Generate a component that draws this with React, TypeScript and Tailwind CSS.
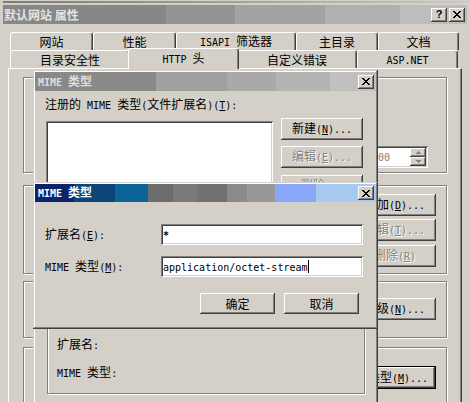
// MIME type dialogs over the IIS "默认网站 属性" sheet — Windows 2000 look

import React from "react";

const raised =
  "bg-[#d4d0c8] shadow-[inset_-1px_-1px_#404040,inset_1px_1px_#ffffff,inset_-2px_-2px_#808080,inset_2px_2px_#d4d0c8]";
const raisedDefault =
  "bg-[#d4d0c8] border border-black shadow-[inset_-1px_-1px_#404040,inset_1px_1px_#ffffff,inset_-2px_-2px_#808080]";
const sunken =
  "bg-white shadow-[inset_1px_1px_#808080,inset_-1px_-1px_#ffffff,inset_2px_2px_#404040,inset_-2px_-2px_#d4d0c8]";
const frame =
  "bg-[#d4d0c8] shadow-[inset_-1px_-1px_#404040,inset_1px_1px_#d4d0c8,inset_-2px_-2px_#808080,inset_2px_2px_#ffffff]";
const etched = "border border-[#808080] shadow-[inset_1px_1px_#ffffff,1px_1px_#ffffff]";
const tab =
  "flex items-center justify-center pt-[1px] border-t border-l border-white border-r border-r-[#404040] rounded-t-[3px] shadow-[inset_-1px_0_#808080]";

// ASCII runs use a 6px-wide mono face, like SimSun's half-width glyphs; "&X" underlines X
function Latin({ s }: { s: string }) {
  const out: React.ReactNode[] = [];
  const re = /&(.)/g;
  let last = 0;
  let k = 0;
  let m: RegExpExecArray | null;
  while ((m = re.exec(s))) {
    if (m.index > last) out.push(s.slice(last, m.index));
    out.push(
      <span key={k++} className="underline underline-offset-[1px]">
        {m[1]}
      </span>
    );
    last = m.index + 2;
  }
  if (last < s.length) out.push(s.slice(last));
  return (
    <span className="font-['DejaVu_Sans_Mono',monospace] text-[10px] leading-[14px] whitespace-pre">{out}</span>
  );
}

function Txt({ s, disabled = false, className = "" }: { s: string; disabled?: boolean; className?: string }) {
  const parts = s.split(/([\x20-\x7e]+)/).filter(Boolean);
  return (
    <span
      className={`whitespace-pre leading-[14px] ${disabled ? "text-[#808080] [text-shadow:1px_1px_0_#ffffff]" : ""} ${className}`}
    >
      {parts.map((p, i) => (/^[\x20-\x7e]+$/.test(p) ? <Latin key={i} s={p} /> : <span key={i}>{p}</span>))}
    </span>
  );
}

function Btn({
  label,
  className = "",
  disabled = false,
  isDefault = false,
}: {
  label: string;
  className?: string;
  disabled?: boolean;
  isDefault?: boolean;
}) {
  return (
    <div className={`flex items-center justify-center shrink-0 ${isDefault ? raisedDefault : raised} ${className}`}>
      <Txt s={label} disabled={disabled} />
    </div>
  );
}

function CloseGlyph() {
  return (
    <svg width="8" height="7" viewBox="0 0 8 7" shapeRendering="crispEdges">
      <path
        fill="#000"
        d="M0 0h2v1H0z M6 0h2v1H6z M1 1h2v1H1z M5 1h2v1H5z M2 2h4v1H2z M3 3h2v1H3z M2 4h4v1H2z M1 5h2v1H1z M5 5h2v1H5z M0 6h2v1H0z M6 6h2v1H6z"
      />
    </svg>
  );
}

function CaptionBtn({ children }: { children: React.ReactNode }) {
  return <div className={`w-[16px] h-[14px] flex items-center justify-center ${raised}`}>{children}</div>;
}

function SpinArrow({ up }: { up: boolean }) {
  return (
    <svg width="5" height="3" viewBox="0 0 5 3" shapeRendering="crispEdges">
      <path fill="#808080" d={up ? "M2 0h1v1h1v1h1v1H0V2h1V1h1z" : "M0 0h5v1H4v1H3v1H2V2H1V1H0z"} />
    </svg>
  );
}

function MainWindow() {
  return (
    <div className="flex flex-col h-[440px] px-[3px] pt-[1px]">
      <div className="h-[2px] bg-linear-to-r from-[#7c7c7c] to-[#c8c8c8]" />
      <div className="h-[2px]" />

      {/* caption */}
      <div className="h-[19px] flex items-center justify-between pl-[1px] pr-[2px] bg-[linear-gradient(to_right,#878787_0_163px,#939393_163px_232px,#a3a3a3_232px_322px,#b0b0b0_322px_397px,#bdbdbd_397px)]">
        <span className="font-bold text-[#e4e4e4]">默认网站 属性</span>
        <div className="flex gap-[2px]">
          <CaptionBtn>
            <span className="font-['Liberation_Sans',sans-serif] font-bold text-[11px] leading-none">?</span>
          </CaptionBtn>
          <CaptionBtn>
            <CloseGlyph />
          </CaptionBtn>
        </div>
      </div>

      {/* tabs */}
      <div className="mt-[8px] ml-[7px] flex h-[18px]">
        <div className={`${tab} w-[83px]`}>网站</div>
        <div className={`${tab} w-[83px]`}>性能</div>
        <div className={`${tab} w-[120px]`}>
          <Txt s="ISAPI 筛选器" />
        </div>
        <div className={`${tab} w-[82px]`}>主目录</div>
        <div className={`${tab} w-[81px]`}>文档</div>
      </div>
      <div className="ml-[7px] flex h-[18px]">
        <div className={`${tab} w-[120px]`}>目录安全性</div>
        <div className="relative z-10 -mt-[2px] -mx-[2px] w-[111px] h-[21px] bg-[#d4d0c8] flex items-center justify-center border-t border-l border-white border-r border-r-[#404040] rounded-t-[3px] shadow-[inset_-1px_0_#808080]">
          <Txt s="HTTP 头" />
        </div>
        <div className={`${tab} w-[120px]`}>自定义错误</div>
        <div className={`${tab} w-[101px]`}>
          <Txt s="ASP.NET" />
        </div>
      </div>

      {/* HTTP header page */}
      <div className="flex-1 ml-[5px] w-[454px] border border-white border-r-[#404040] border-b-[#404040] shadow-[inset_-1px_-1px_#808080] pt-[8px] px-[14px] flex flex-col">
        <div className={`${etched} h-[96px] flex items-end justify-end pb-[4px] pr-[18px]`}>
          <div className={`${sunken} w-[88px] h-[22px] flex items-center justify-end p-[2px]`}>
            <Txt s="00" disabled className="mr-[20px]" />
            <div className="flex flex-col">
              <div className={`${raised} w-[16px] h-[9px] flex items-center justify-center`}>
                <SpinArrow up />
              </div>
              <div className={`${raised} w-[16px] h-[9px] flex items-center justify-center`}>
                <SpinArrow up={false} />
              </div>
            </div>
          </div>
        </div>

        <div className={`${etched} mt-[12px] h-[89px] flex flex-col items-end pt-[8px] pr-[10px]`}>
          <Btn label="添加(&D)..." className="w-[82px] h-[22px]" />
          <Btn label="编辑(&T)..." disabled className="w-[82px] h-[22px] mt-[3px]" />
          <Btn label="删除(&R)" disabled className="w-[82px] h-[22px] mt-[4px]" />
        </div>

        <div className={`${etched} mt-[7px] h-[57px] flex flex-col items-end pt-[16px] pr-[10px]`}>
          <Btn label="高级(&N)..." className="w-[82px] h-[22px]" />
        </div>

        <div className={`${etched} mt-[9px] h-[80px] flex flex-col items-end pt-[18px] pr-[10px]`}>
          <Btn label="文件类型(&M)..." isDefault className="w-[100px] h-[23px]" />
        </div>
      </div>
    </div>
  );
}

function MimeListDialog() {
  return (
    <div className={`absolute left-[33px] top-[70px] w-[345px] h-[345px] p-[2px] ${frame}`}>
      <div className="h-[19px] flex items-center justify-between pl-[3px] pr-[2px] bg-[linear-gradient(to_right,#898989_0_121px,#a0a0a0_121px_192px,#a9a9a9_192px_241px,#b4b4b4_241px_295px,#c0c0c0_295px)]">
        <Txt s="MIME 类型" className="font-bold text-[#dedede]" />
        <CaptionBtn>
          <CloseGlyph />
        </CaptionBtn>
      </div>

      <div className="pl-[10px] flex flex-col">
        <div className="mt-[7px] h-[14px] flex items-center">
          <Txt s="注册的 MIME 类型(文件扩展名)(&T):" />
        </div>
        <div className="mt-[6px] flex">
          <div className={`${sunken} mt-[3px] ml-[1px] w-[227px] h-[180px]`} />
          <div className="ml-[8px] flex flex-col">
            <Btn label="新建(&N)..." className="w-[82px] h-[22px]" />
            <Btn label="编辑(&E)..." disabled className="w-[82px] h-[22px] mt-[6px]" />
            <Btn label="删除(&R)" disabled className="w-[82px] h-[22px] mt-[7px]" />
          </div>
        </div>
        <div className={`${etched} mt-[17px] ml-[2px] w-[318px] h-[76px] flex flex-col pt-[19px] pl-[9px]`}>
          <div className="h-[14px] flex items-center">
            <Txt s="扩展名:" />
          </div>
          <div className="mt-[14px] h-[14px] flex items-center">
            <Txt s="MIME 类型:" />
          </div>
        </div>
      </div>
    </div>
  );
}

function MimeEditDialog() {
  return (
    <div className={`absolute left-[33px] top-[182px] w-[345px] h-[147px] p-[2px] ${frame}`}>
      <div className="h-[18px] flex items-center justify-between pl-[3px] pr-[2px] bg-[linear-gradient(to_right,#0a246a_0_39px,#0c4577_39px_80px,#0a6497_80px_113px,#6d6d6d_113px_138px,#7a7a7a_138px_162px,#727272_162px_192px,#8a8a8a_192px_212px,#989898_212px_240px,#8aa8f8_240px_281px,#a6caf0_281px)]">
        <Txt s="MIME 类型" className="font-bold text-white" />
        <CaptionBtn>
          <CloseGlyph />
        </CaptionBtn>
      </div>

      <div className="pl-[10px] flex flex-col">
        <div className="mt-[22px] h-[21px] flex items-center">
          <div className="w-[116px]">
            <Txt s="扩展名(&E):" />
          </div>
          <div className={`${sunken} w-[202px] h-[21px] flex items-center pl-[2px]`}>
            <Txt s="*" className="font-bold" />
          </div>
        </div>
        <div className="mt-[11px] h-[21px] flex items-center">
          <div className="w-[116px]">
            <Txt s="MIME 类型(&M):" />
          </div>
          <div className={`${sunken} w-[202px] h-[21px] flex items-center pl-[2px]`}>
            <Txt s="application/octet-stream" />
            <span className="inline-block w-px h-[13px] bg-black" />
          </div>
        </div>
        <div className="mt-[16px] pr-[17px] flex justify-end gap-[9px]">
          <Btn label="确定" className="w-[75px] h-[21px]" />
          <Btn label="取消" className="w-[75px] h-[21px]" />
        </div>
      </div>
    </div>
  );
}

export default function App() {
  return (
    <div className="relative w-[470px] h-[402px] overflow-hidden bg-[#d4d0c8] text-black text-[12px] leading-[14px] font-['Noto_Sans_CJK_SC',sans-serif]">
      <MainWindow />
      <MimeListDialog />
      <MimeEditDialog />
    </div>
  );
}
